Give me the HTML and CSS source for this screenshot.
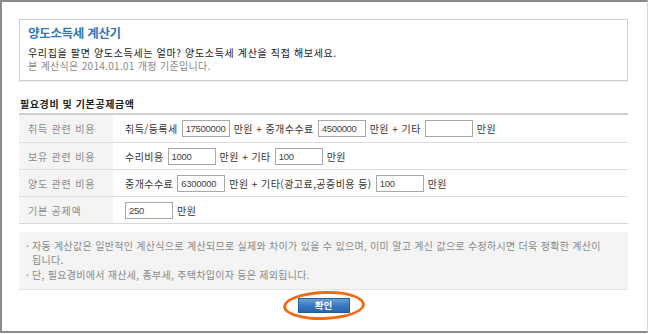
FILE: index.html
```html
<!DOCTYPE html>
<html lang="ko">
<head>
<meta charset="utf-8">
<link rel="stylesheet" href="styles.css">
</head>
<body>
<div class="frame">
  <div class="intro">
    <h1 class="title">양도소득세 계산기</h1>
    <p class="lead">우리집을 팔면 양도소득세는 얼마? 양도소득세 계산을 직접 해보세요.</p>
    <p class="sub">본 계산식은 2014.01.01 개정 기준입니다.</p>
  </div>

  <h2 class="section">필요경비 및 기본공제금액</h2>

  <div class="table">
    <div class="row r1">
      <div class="label">취득 관련 비용</div>
      <div class="cell">취득/등록세 <span class="input">17500000</span> 만원 + 중개수수료 <span class="input">4500000</span> 만원 + 기타 <span class="input w2"></span> 만원</div>
    </div>
    <div class="row">
      <div class="label">보유 관련 비용</div>
      <div class="cell">수리비용 <span class="input">1000</span> 만원 + 기타 <span class="input">100</span> 만원</div>
    </div>
    <div class="row">
      <div class="label">양도 관련 비용</div>
      <div class="cell">중개수수료 <span class="input">6300000</span> 만원 + 기타(광고료,공증비용 등) <span class="input">100</span> 만원</div>
    </div>
    <div class="row r4">
      <div class="label">기본 공제액</div>
      <div class="cell"><span class="input">250</span> 만원</div>
    </div>
  </div>

  <div class="note">
    <p><span class="dot">·</span>자동 계산값은 일반적인 계산식으로 계산되므로 실제와 차이가 있을 수 있으며, 이미 알고 계신 값으로 수정하시면 더욱 정확한 계산이 됩니다.</p>
    <p><span class="dot">·</span>단, 필요경비에서 재산세, 종부세, 주택차입이자 등은 제외됩니다.</p>
  </div>

  <div class="actions">
    <span class="btn-wrap">
      <button class="btn" type="button">확인</button>
      <span class="circle"></span>
    </span>
  </div>
</div>
</body>
</html>
```
FILE: styles.css
```css
* { box-sizing: border-box; }
html, body { margin: 0; padding: 0; background: #fff; }
body {
  font-family: "Noto Sans CJK KR", "Noto Sans", sans-serif;
  font-size: 10px;
  color: #333;
  width: 648px;
  height: 334px;
  overflow: hidden;
}
.frame {
  width: 648px;
  height: 333px;
  border-top: 2px solid #8a8a8a;
  border-left: 2px solid #8a8a8a;
  border-bottom: 2px solid #8a8a8a;
  border-right: 1px solid #d8d8d8;
  padding: 17px 19px 0 17px;
}
.intro {
  border: 1px solid #cfcfcf;
  height: 62px;
  padding: 5px 8px 0 8px;
  box-shadow: 0 1px 0 #eee;
}
.title {
  margin: 0;
  font-size: 12.5px;
  font-weight: bold;
  color: #3177b4;
  line-height: 16px;
  letter-spacing: -0.3px;
}
.lead {
  margin: 6px 0 0 0;
  line-height: 12px;
  color: #222;
  letter-spacing: 0.65px;
}
.sub {
  margin: 1px 0 0 0;
  line-height: 12px;
  color: #888;
  letter-spacing: 0.3px;
}
.section {
  margin: 16px 0 0 1px;
  font-size: 10px;
  font-weight: bold;
  color: #222;
  line-height: 14px;
  letter-spacing: 0.6px;
}
.table {
  margin-top: 2px;
  border-top: 2px solid #cfcfcf;
  border-bottom: 1px solid #d8d8d8;
}
.row {
  display: flex;
  height: 27px;
  border-bottom: 1px solid #dedede;
}
.row.r1 { height: 28px; }
.row.r4 { height: 26px; border-bottom: none; }
.label {
  width: 94px;
  flex: none;
  background: #f4f4f4;
  color: #8a8a8a;
  display: flex;
  align-items: center;
  padding-left: 9px;
  letter-spacing: 0.8px;
}
.cell {
  flex: 1;
  display: flex;
  align-items: center;
  gap: 4px;
  padding-left: 12px;
  color: #333;
  letter-spacing: 0.45px;
  white-space: nowrap;
}
.input {
  display: inline-block;
  width: 48px;
  height: 17px;
  border: 1px solid #a8a8a8;
  background: #fff;
  font-family: "Liberation Sans", Arial, sans-serif;
  font-size: 9.5px;
  line-height: 15px;
  padding-left: 3px;
  color: #444;
  letter-spacing: -0.3px;
}
.note {
  margin-top: 8px;
  background: #f4f4f4;
  border-bottom: 1px solid #e4e4e4;
  height: 58px;
  padding: 7px 8px 0 7px;
  color: #8a8a8a;
  letter-spacing: 0.3px;
  word-break: keep-all;
}
.note p {
  margin: 0;
  line-height: 14px;
  padding-left: 6px;
  text-indent: -6px;
}
.note p + p { margin-top: 1px; }
.dot { display: inline-block; width: 6px; text-indent: 0; }
.actions {
  display: flex;
  justify-content: center;
  margin-top: 8px;
}
.btn-wrap { position: relative; display: inline-block; }
.btn {
  display: block;
  width: 52px;
  height: 15px;
  padding: 0;
  border: 1px solid #235d9e;
  background: linear-gradient(#6a9fd8, #3576c2 55%, #2c66ad);
  color: #fff;
  font-family: "Noto Sans CJK KR", sans-serif;
  font-size: 9.5px;
  font-weight: bold;
  line-height: 13px;
}
.circle {
  position: absolute;
  left: -15px;
  top: -7px;
  width: 82px;
  height: 29px;
  border: 3.5px solid #f26a12;
  border-radius: 50%;
  transform: rotate(-2deg);
}
```
